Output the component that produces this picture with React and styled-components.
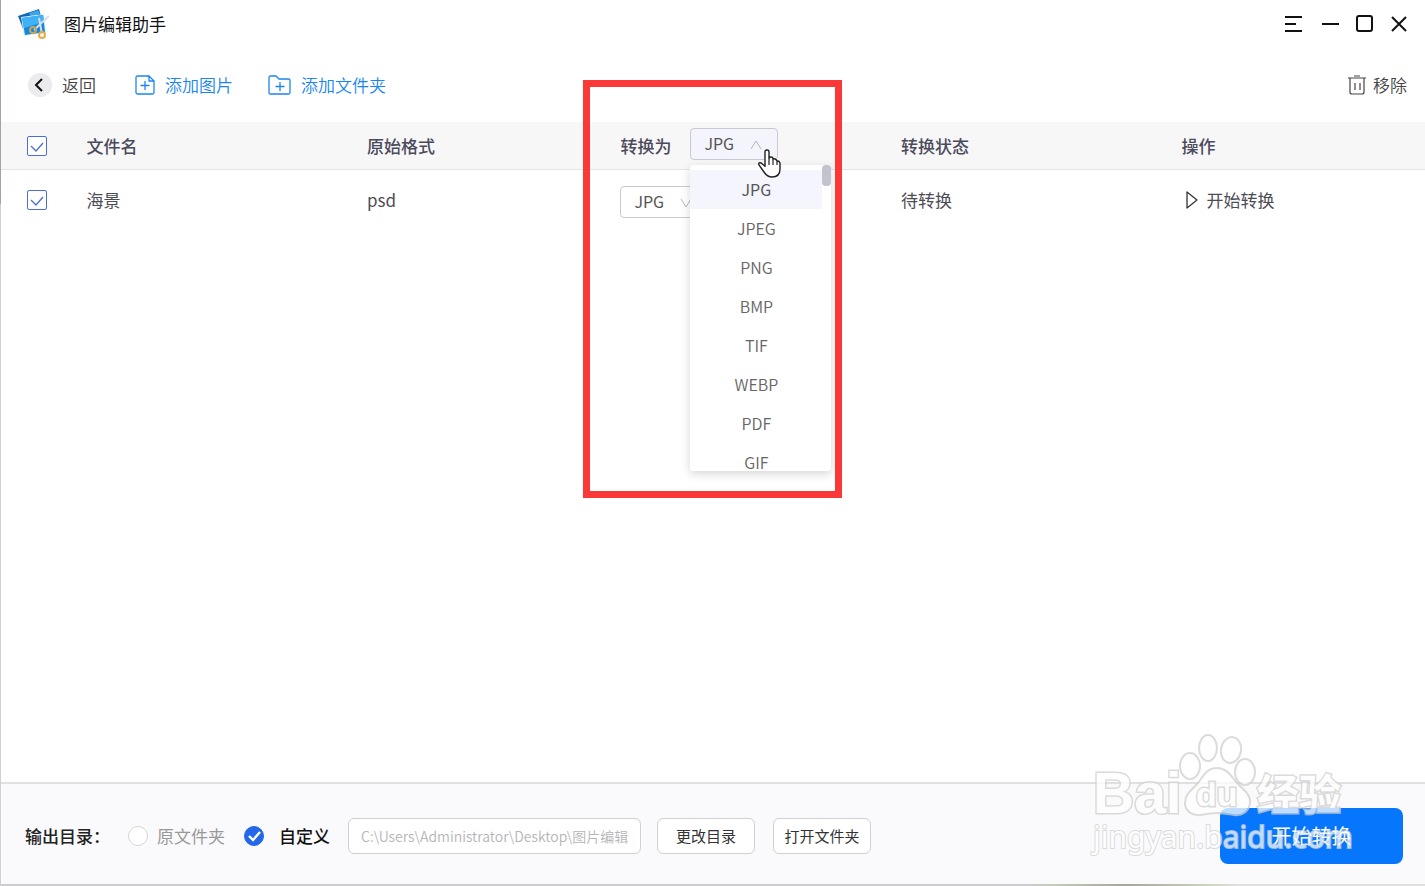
import React, { useState } from "react";
import styled, { createGlobalStyle } from "styled-components";

const formats = ["JPG", "JPEG", "PNG", "BMP", "TIF", "WEBP", "PDF", "GIF"];

const GlobalStyle = createGlobalStyle`
  * {
    box-sizing: border-box;
  }

  body {
    margin: 0;
    background: #fff;
    color: #333;
    font-family: "Noto Sans CJK SC", "Noto Sans", sans-serif;
    font-size: 17px;
    line-height: 24px;
  }

  button, input, select {
    font: inherit;
    color: inherit;
    margin: 0;
  }
`;

const Window = styled.div`
  position: relative;
  display: flex;
  flex-direction: column;
  min-height: 100vh;
  padding: 0 0 2px 1px;
  overflow: hidden;
  background:
    linear-gradient(#9ca898 204px, #d0d0d2 204px) left top / 1px 100% no-repeat,
    linear-gradient(90deg, #cdcdcf 72%, #c3ccb8 74%, #a3a89a 79%, #ccd6c0 85%, #e0e0e0 87%) left bottom / 100% 2px no-repeat;
`;

const TitleBar = styled.header`
  display: flex;
  align-items: center;
  height: 48px;
  padding: 0 16px;
  color: #111;

  h1 {
    flex: 1;
    margin: 0 0 0 15px;
    font-size: 17px;
    font-weight: 400;
  }
`;

const WindowButton = styled.button`
  display: flex;
  padding: 0;
  margin-left: 15px;
  border: 0;
  background: none;
  color: #111;
`;

const Toolbar = styled.nav`
  display: flex;
  align-items: center;
  height: 74px;
  padding: 0 18px 0 27px;
`;

const ToolButton = styled.button`
  display: flex;
  align-items: center;
  gap: ${props => props.$gap || 10}px;
  padding: 0;
  margin-right: ${props => (props.$last ? 0 : props.$space || 35)}px;
  margin-left: ${props => (props.$last ? "auto" : 0)};
  border: 0;
  background: none;
  color: ${props => (props.$primary ? "#1a86f0" : "#444")};
  font-weight: 350;
`;

const FileTable = styled.table`
  width: 100%;
  table-layout: fixed;
  border-collapse: separate;
  border-spacing: 0;

  th,
  td {
    position: relative;
    padding: 0;
    text-align: left;
  }

  th {
    height: 48px;
    background: #f7f7f8;
    border-bottom: 1px solid #e4e4e8;
    color: #4a4a5c;
    font-weight: 500;
  }

  td {
    height: 60px;
    color: #4c4c55;
  }
`;

const CheckBox = styled.input`
  display: block;
  appearance: none;
  width: 20px;
  height: 20px;
  margin: 0 0 0 26px;
  border: 1px solid #4a6fd8;
  border-radius: 2px;
  background: #fff;

  &:checked {
    background: #fff
      url("data:image/svg+xml,%3Csvg xmlns='http://www.w3.org/2000/svg' viewBox='0 0 18 18'%3E%3Cpath d='M3 9l5 5 7-8' fill='none' stroke='%234a6fd8' stroke-width='1.3'/%3E%3C/svg%3E")
      center / 18px 18px no-repeat;
  }
`;

const ConvertHead = styled.div`
  display: flex;
  align-items: center;
  gap: 19px;
`;

const Picker = styled.div`
  position: relative;
  display: flex;
  width: 88px;
  margin-top: ${props => (props.$open ? 0 : 4)}px;
  margin-bottom: ${props => (props.$open ? 3 : 0)}px;

  select {
    appearance: none;
    width: 88px;
    height: 32px;
    padding: 0 13px 2px;
    border: 1px solid #c9c9d4;
    border-radius: 4px;
    background: ${props => (props.$open ? "#f4f4fd" : "#fff")};
    color: #555;
    font-size: 16px;
    font-weight: 400;
    line-height: 24px;
  }

  > svg {
    position: absolute;
    top: 12px;
    right: 16px;
    pointer-events: none;
  }
`;

const Menu = styled.ul`
  position: absolute;
  z-index: 2;
  top: 37px;
  left: 0;
  width: 141px;
  height: 306px;
  margin: 0;
  padding: 5px 9px 0 0;
  overflow: hidden;
  list-style: none;
  border-radius: 4px;
  background: #fff;
  box-shadow: 0 3px 10px rgba(0, 0, 0, 0.16);
`;

const Option = styled.li`
  height: 39px;
  background: ${props => (props["aria-selected"] ? "#f5f5fe" : "#fff")};
  color: ${props => (props["aria-selected"] ? "#555" : "#666")};
  font-size: 16px;
  font-weight: ${props => (props["aria-selected"] ? 400 : 350)};
  line-height: 39px;
  text-align: center;
`;

const Thumb = styled.div`
  position: absolute;
  z-index: 3;
  top: 37px;
  left: 132px;
  width: 9px;
  height: 21px;
  border-radius: 4px;
  background: #c3c3cd;
`;

const Pointer = styled.svg`
  && {
    z-index: 4;
    top: 20px;
    right: -4px;
  }
`;

const Highlight = styled.div`
  position: absolute;
  z-index: 5;
  top: -42px;
  left: -37px;
  width: 259px;
  height: 418px;
  border: 7px solid #fb3838;
  pointer-events: none;
`;

const RowAction = styled.button`
  display: flex;
  align-items: center;
  gap: 7px;
  padding: 0 0 0 4px;
  border: 0;
  background: none;
`;

const Footer = styled.footer`
  display: flex;
  align-items: center;
  height: 102px;
  margin-top: auto;
  padding: 4px 22px 0 24px;
  border-top: 2px solid #e0e0e4;
  background: #fafafc;
`;

const FooterTitle = styled.span`
  color: #222;
  font-weight: 500;
  width: 103px;
`;

const RadioLabel = styled.label`
  display: flex;
  align-items: center;
  gap: ${props => (props.$active ? 15 : 9)}px;
  margin-right: ${props => (props.$active ? 18 : 19)}px;
  color: ${props => (props.$active ? "#111" : "#999")};
  font-weight: ${props => (props.$active ? 500 : 400)};

  input {
    appearance: none;
    width: 20px;
    height: 20px;
    border: 1px solid #d5d5da;
    border-radius: 50%;
    background: #fff;
  }

  input:checked {
    border-color: #2468ea;
    background: #2468ea
      url("data:image/svg+xml,%3Csvg xmlns='http://www.w3.org/2000/svg' viewBox='0 0 18 18'%3E%3Cpath d='M4 9l4 4 7-8' fill='none' stroke='%23fff' stroke-width='2.4'/%3E%3C/svg%3E")
      center / 18px 18px no-repeat;
  }
`;

const PathInput = styled.input`
  width: 293px;
  height: 36px;
  padding: 0 12px;
  border: 1px solid #cfcfd4;
  border-radius: 6px;
  background: #fff;
  color: #b5b5b8;
  font-size: 14px;
  font-weight: 350;
`;

const SmallButton = styled.button`
  width: 98px;
  height: 36px;
  margin-left: ${props => props.$gap}px;
  padding: 0;
  border: 1px solid #cfcfd4;
  border-radius: 6px;
  background: #fff;
  color: #333;
  font-size: 15px;
  white-space: nowrap;
`;

const StartButton = styled.button`
  width: 183px;
  height: 56px;
  margin-left: auto;
  border: 0;
  border-radius: 8px;
  background: #0676fd;
  color: #fff;
  font-size: 20px;
`;

const Watermark = styled.svg`
  position: absolute;
  z-index: 6;
  right: 65px;
  bottom: 25px;
  pointer-events: none;
  opacity: 0.75;

  text {
    paint-order: stroke;
  }
`;

const Logo = () => (
  <svg width="32" height="32" viewBox="0 0 32 32" aria-hidden="true">
    <path d="M1 8L22 1l5 18-19 7z" fill="#1267b4" />
    <path d="M12 5l9-3 2 4-9 3z" fill="#3ba5ea" />
    <path d="M4 9l23-3 2 19-22 3z" fill="#d5efff" />
    <path d="M5 10l21-3 2 17-20 3z" fill="#1488e0" />
    <path d="M5 10l21-3 1 7-20 6z" fill="#3fb2f5" />
    <path d="M32 8L17 22M22 10l3 16" stroke="#d5dde5" strokeWidth="2" fill="none" />
    <circle cx="16" cy="22" r="3" fill="none" stroke="#c9a456" strokeWidth="2" />
    <circle cx="25" cy="27" r="3" fill="none" stroke="#e9a944" strokeWidth="2" />
  </svg>
);

const Caret = ({ up }) => (
  <svg width="12" height="10" viewBox="0 0 12 10" aria-hidden="true">
    <path d={up ? "M1 9l5-8 5 8" : "M1 1l5 8 5-8"} fill="none" stroke="#b5b5bd" />
  </svg>
);

const BaiduMark = () => (
  <Watermark width="270" height="130" viewBox="0 0 270 130">
    <g fill="#fff" stroke="#d0d0d0" strokeWidth="2">
      <ellipse cx="100" cy="35" rx="10" ry="13" />
      <ellipse cx="118" cy="17" rx="9" ry="13" />
      <ellipse cx="141" cy="19" rx="10" ry="13" transform="rotate(10 141 19)" />
      <ellipse cx="155" cy="41" rx="10" ry="13" />
      <path d="M127 37c10 0 14 8 20 15 7 7 14 12 13 20-1 9-8 13-16 12-6-1-11-2-17-2s-11 1-16 2c-9 1-16-4-16-12 0-9 7-13 13-20 6-8 9-15 19-15z" />
      <g fontFamily="Liberation Sans, sans-serif" fontWeight="700" strokeWidth="3">
        <text x="3" y="82" fontSize="57">Bai</text>
        <text x="106" y="75" fontSize="34">du</text>
      </g>
      <text x="167" y="79" fontSize="42" fontWeight="700" strokeWidth="3" fontFamily="Noto Sans CJK SC, sans-serif">经验</text>
      <text x="3" y="117" fontSize="30" fontFamily="Noto Sans, sans-serif">jingyan.baidu.com</text>
    </g>
  </Watermark>
);

const App = () => {
  const [format, setFormat] = useState("JPG");
  const [rowFormat, setRowFormat] = useState("JPG");
  const [target, setTarget] = useState("custom");

  return (
    <Window>
      <GlobalStyle />
      <TitleBar>
        <Logo />
        <h1>图片编辑助手</h1>
        <WindowButton aria-label="菜单">
          <svg width="20" height="20" fill="none" stroke="currentColor" strokeWidth="2">
            <path d="M1 3h17M1 10h11M1 17h17" />
          </svg>
        </WindowButton>
        <WindowButton aria-label="最小化">
          <svg width="20" height="20" fill="none" stroke="currentColor" strokeWidth="2">
            <path d="M3 10h17" />
          </svg>
        </WindowButton>
        <WindowButton aria-label="最大化">
          <svg width="20" height="20" fill="none" stroke="currentColor" strokeWidth="2">
            <rect x="3" y="2" width="15" height="15" rx="2" />
          </svg>
        </WindowButton>
        <WindowButton aria-label="关闭">
          <svg width="20" height="20" fill="none" stroke="currentColor" strokeWidth="2">
            <path d="M3 3l14 14M17 3L3 17" />
          </svg>
        </WindowButton>
      </TitleBar>

      <Toolbar>
        <ToolButton $space={39}>
          <svg width="24" height="24" viewBox="0 0 24 24" aria-hidden="true">
            <circle cx="12" cy="12" r="12" fill="#ebebed" />
            <path d="M14 6l-6 6 6 6" fill="none" stroke="#111" strokeWidth="2" />
          </svg>
          返回
        </ToolButton>
        <ToolButton $primary>
          <svg width="20" height="20" viewBox="0 0 20 20" fill="none" stroke="currentColor" strokeWidth="1.3" aria-hidden="true">
            <path d="M14 1H2.500Q1 1 1 2.500V17.500Q1 19 2.500 19H17.500Q19 19 19 17.500V6L14 1V6H19M10 6v9M5.500 10.500h9" />
          </svg>
          添加图片
        </ToolButton>
        <ToolButton $primary>
          <svg width="23" height="20" viewBox="0 0 23 20" fill="none" stroke="currentColor" strokeWidth="1.3" aria-hidden="true">
            <path d="M1 17.500V2.500Q1 1 2.500 1H8l3 3H20.500Q22 4 22 5.500V17.500Q22 19 20.500 19H2.500Q1 19 1 17.500zM12 7v9M7.500 11.500h9" />
          </svg>
          添加文件夹
        </ToolButton>
        <ToolButton $last $gap={6}>
          <svg width="20" height="20" viewBox="0 0 20 20" fill="none" stroke="currentColor" strokeWidth="1.2" aria-hidden="true">
            <path d="M1 3h18M7 1h6M3 3v14q0 2 2 2h10q2 0 2-2V3M8 8v7M13 8v7" />
          </svg>
          移除
        </ToolButton>
      </Toolbar>

      <FileTable>
        <colgroup>
          <col style={{ width: "6%" }} />
          <col style={{ width: "19.7%" }} />
          <col style={{ width: "17.8%" }} />
          <col style={{ width: "19.7%" }} />
          <col style={{ width: "19.7%" }} />
          <col />
        </colgroup>
        <thead>
          <tr>
            <th>
              <CheckBox type="checkbox" aria-label="全选" defaultChecked />
            </th>
            <th>文件名</th>
            <th>原始格式</th>
            <th>
              <ConvertHead>
                <label htmlFor="format">转换为</label>
                <Picker $open>
                  <select id="format" value={format} onChange={e => setFormat(e.target.value)}>
                    {formats.map(f => (
                      <option key={f}>{f}</option>
                    ))}
                  </select>
                  <Caret up />
                  <Menu role="listbox" aria-label="转换格式">
                    {formats.map(f => (
                      <Option key={f} role="option" aria-selected={f === format} onClick={() => setFormat(f)}>
                        {f}
                      </Option>
                    ))}
                  </Menu>
                  <Thumb />
                  <Pointer width="26" height="31" viewBox="0 0 26 31" aria-hidden="true">
                    <path
                      d="M9 19V4q0-2 2-2t2 2v7q0-2 2-2t2 2v1q0-2 2-1t2 2v1q0-1 1-1t2 2v6c0 5-3 8-8 8-4 0-6-2-8-5l-5-7q-1-3 2-2l4 3"
                      fill="#fff"
                      stroke="#222"
                      strokeWidth="1.4"
                    />
                    <path d="M13 11v6M17 12v5M21 14v3" stroke="#222" strokeWidth="1.2" />
                  </Pointer>
                </Picker>
              </ConvertHead>
              <Highlight />
            </th>
            <th>转换状态</th>
            <th>操作</th>
          </tr>
        </thead>
        <tbody>
          <tr>
            <td>
              <CheckBox type="checkbox" aria-label="海景" defaultChecked />
            </td>
            <td>海景</td>
            <td>psd</td>
            <td>
              <Picker>
                <select aria-label="转换为" value={rowFormat} onChange={e => setRowFormat(e.target.value)}>
                  {formats.map(f => (
                    <option key={f}>{f}</option>
                  ))}
                </select>
                <Caret />
              </Picker>
            </td>
            <td>待转换</td>
            <td>
              <RowAction>
                <svg width="14" height="18" viewBox="0 0 14 18" aria-hidden="true">
                  <path d="M2 1v16L12 9z" fill="none" stroke="#333" strokeWidth="1.3" strokeLinejoin="round" />
                </svg>
                开始转换
              </RowAction>
            </td>
          </tr>
        </tbody>
      </FileTable>

      <Footer>
        <FooterTitle>输出目录：</FooterTitle>
        <RadioLabel>
          <input type="radio" name="target" checked={target === "source"} onChange={() => setTarget("source")} />
          原文件夹
        </RadioLabel>
        <RadioLabel $active>
          <input type="radio" name="target" checked={target === "custom"} onChange={() => setTarget("custom")} />
          自定义
        </RadioLabel>
        <PathInput aria-label="输出目录" defaultValue="C:\Users\Administrator\Desktop\图片编辑" />
        <SmallButton $gap={16}>更改目录</SmallButton>
        <SmallButton $gap={18}>打开文件夹</SmallButton>
        <StartButton>开始转换</StartButton>
      </Footer>
      <BaiduMark />
    </Window>
  );
};

export default App;
